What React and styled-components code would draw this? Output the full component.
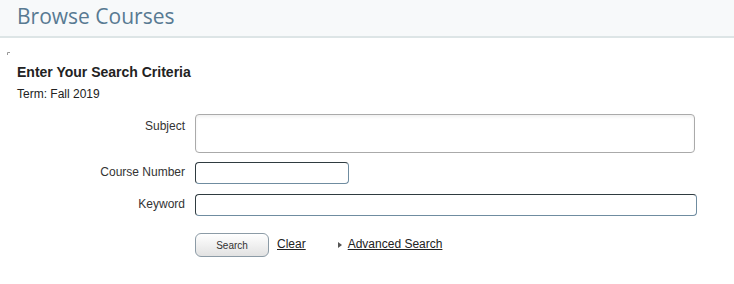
import React from "react";
import styled, { createGlobalStyle } from "styled-components";

const GlobalStyle = createGlobalStyle`
  html, body {
    margin: 0;
    padding: 0;
    background: #ffffff;
  }
  body {
    font-family: "Liberation Sans", Arial, sans-serif;
    color: #222;
  }
`;

const Page = styled.div`
  width: 734px;
  height: 284px;
  overflow: hidden;
`;

const Header = styled.header`
  height: 36px;
  background: #f7f9fa;
  border-bottom: 2px solid #dde5e6;
  padding-left: 17px;
  display: flex;
  align-items: center;
`;

const Title = styled.h1`
  margin: 0;
  font-family: "Open Sans", sans-serif;
  font-weight: 500;
  font-size: 21px;
  color: #587a92;
  line-height: 30px;
  margin-top: -4px;
`;

const Body = styled.main`
  position: relative;
  padding: 26px 0 0 17px;
`;

const Corner = styled.svg`
  position: absolute;
  left: 7px;
  top: 14px;
`;

const Heading = styled.h2`
  margin: 0;
  font-size: 14px;
  font-weight: 700;
  color: #222;
  line-height: 16px;
`;

const Term = styled.p`
  margin: 7px 0 0;
  font-size: 12px;
  line-height: 14px;
  color: #222;
`;

const Form = styled.form`
  display: grid;
  grid-template-columns: 168px 1fr;
  column-gap: 10px;
  row-gap: 9px;
  margin-top: 13px;
  align-items: start;
`;

const Label = styled.label`
  text-align: right;
  font-size: 12px;
  color: #333;
  line-height: 14px;
  padding-top: ${(p) => p.$top || 3}px;
  margin-top: ${(p) => p.$mt || 0}px;
`;

const TextArea = styled.textarea`
  width: 500px;
  height: 39px;
  box-sizing: border-box;
  border: 1px solid #aaaaaa;
  border-radius: 4px;
  box-shadow: inset 0 2px 3px rgba(0, 0, 0, 0.06);
  resize: none;
  margin: 0;
  font-family: inherit;
`;

const Input = styled.input`
  width: ${(p) => p.$w}px;
  height: 22px;
  box-sizing: border-box;
  border: 1px solid;
  border-color: #2f3b40 #6f8ca0 #6f8ca0 #2f3b40;
  border-radius: 4px;
  margin: ${(p) => p.$mt || 0}px 0 0;
  padding: 0 4px;
  font-family: inherit;
  font-size: 12px;
`;

const Actions = styled.div`
  grid-column: 2;
  display: flex;
  align-items: center;
  margin-top: 8px;
`;

const Button = styled.button`
  width: 74px;
  height: 24px;
  border: 1px solid #8c9ba6;
  border-radius: 6px;
  background: linear-gradient(#ffffff, #e2e2e2);
  font-family: inherit;
  font-size: 10px;
  color: #333;
  padding: 0;
`;

const Link = styled.a`
  font-size: 12px;
  color: #222;
  text-decoration: underline;
  margin-left: ${(p) => p.$ml}px;
  margin-top: -2px;
  display: flex;
  align-items: center;
`;

const Arrow = styled.span`
  width: 0;
  height: 0;
  border-top: 3.5px solid transparent;
  border-bottom: 3.5px solid transparent;
  border-left: 4px solid #555;
  margin-left: 32px;
  margin-right: 6px;
  margin-top: -1px;
`;

export default function App() {
  return (
    <Page>
      <GlobalStyle />
      <Header>
        <Title>Browse Courses</Title>
      </Header>
      <Body>
        <Corner width="3" height="3" viewBox="0 0 3 3">
          <path d="M0.5 3V0.5H3" stroke="#999" fill="none" />
        </Corner>
        <Heading>Enter Your Search Criteria</Heading>
        <Term>Term: Fall 2019</Term>
        <Form onSubmit={(e) => e.preventDefault()}>
          <Label $top={5}>Subject</Label>
          <TextArea />
          <Label>Course Number</Label>
          <Input $w={154} />
          <Label $mt={1}>Keyword</Label>
          <Input $w={502} $mt={1} />
          <Actions>
            <Button type="button">Search</Button>
            <Link href="#" $ml={8}>Clear</Link>
            <Arrow />
            <Link href="#" $ml={0}>Advanced Search</Link>
          </Actions>
        </Form>
      </Body>
    </Page>
  );
}
